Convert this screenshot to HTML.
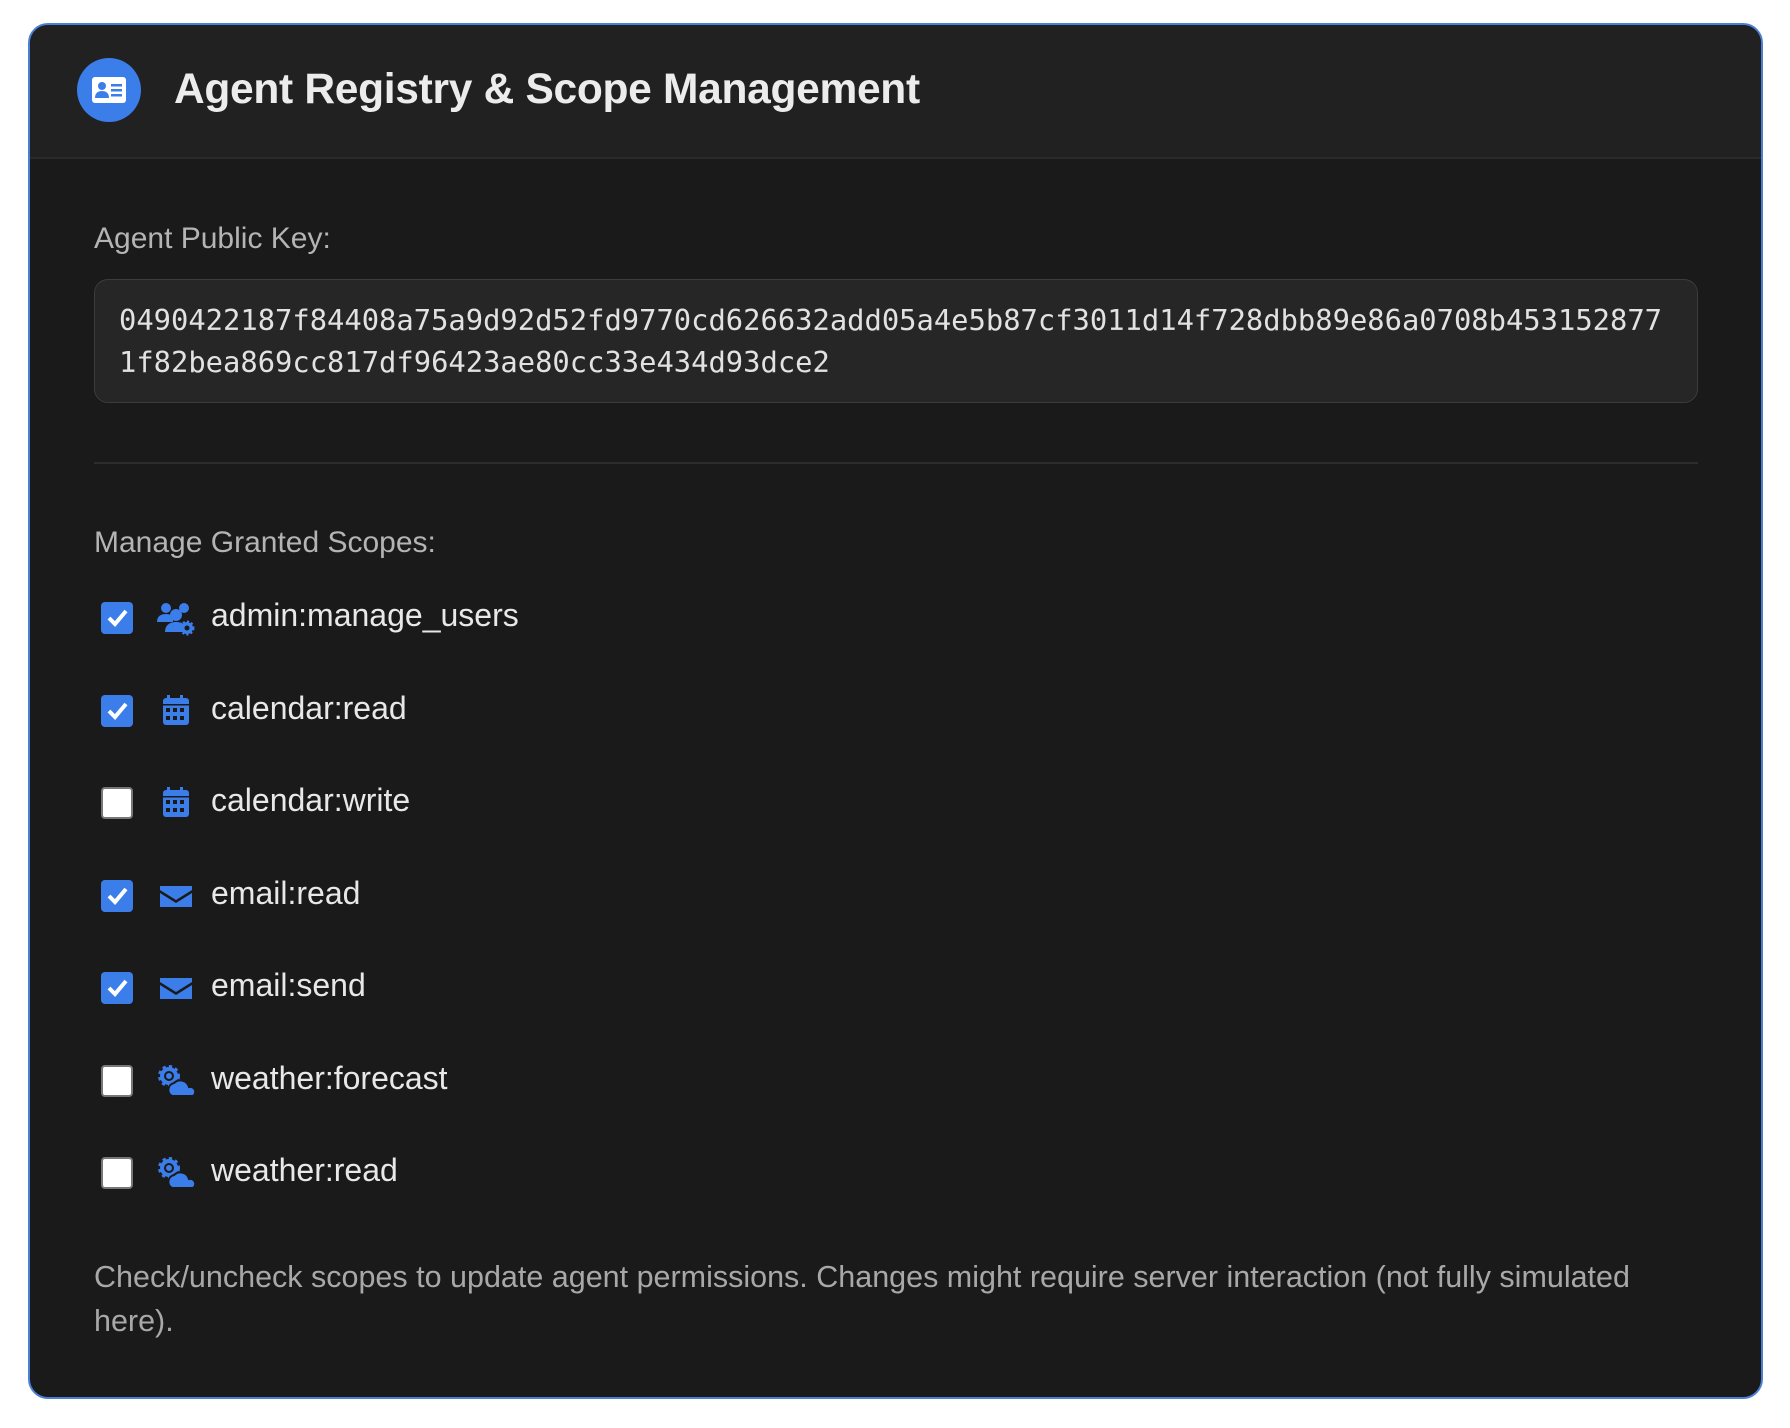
<!DOCTYPE html>
<html><head><style>
*{box-sizing:border-box;margin:0;padding:0}
body{width:1790px;height:1428px;background:#fff;font-family:"Liberation Sans",sans-serif;position:relative;overflow:hidden}
.card{position:absolute;left:28px;top:23px;width:1735px;height:1376px;background:#1a1a1a;border:2px solid #4a7fd6;border-radius:20px;overflow:hidden}
.hdr{position:absolute;left:0;top:0;right:0;height:134px;background:#212121;border-bottom:2px solid #2a2a2a}
.logo{position:absolute;left:47px;top:33px;width:64px;height:64px;border-radius:50%;background:#3b7de9}
.title{position:absolute;left:144px;top:41px;font-size:42.5px;font-weight:bold;color:#ececec;letter-spacing:-0.3px}
.lbl{position:absolute;left:64px;font-size:30px;color:#b4b4b4}
.key{position:absolute;left:64px;top:254px;width:1604px;height:124px;background:#262626;border:1.5px solid #3c3c3c;border-radius:14px;padding:19px 0 0 24px;font-family:"DejaVu Sans Mono","Liberation Mono",monospace;font-size:28.8px;line-height:42px;color:#e2e2e2;white-space:nowrap}
.div{position:absolute;left:64px;top:437px;width:1604px;height:2px;background:#2c2c2c}
.row{position:absolute;left:71px;height:34px}
.cb{position:absolute;left:0;top:0;width:32px;height:32px;border-radius:4px;background:#3b7de9}
.cb.off{background:#fff;border:2px solid #777}
.ic{position:absolute;left:56px;top:-2px;width:38px;height:36px}
.tx{position:absolute;left:110px;top:-5px;font-size:32px;color:#e8e8e8;white-space:nowrap}
.foot{position:absolute;left:64px;top:1230px;width:1600px;font-size:30.5px;line-height:44px;color:#a8a8a8}
</style></head><body>
<div class="card">
<div class="hdr">
<div class="logo"><svg width="64" height="64" viewBox="0 0 64 64"><rect x="15" y="19" width="34" height="26" rx="3" fill="#fff"/><circle cx="25" cy="28" r="4" fill="#3b7de9"/><path d="M18 40c0-5 3-7 7-7s7 2 7 7z" fill="#3b7de9"/><rect x="34" y="26" width="11" height="2.5" fill="#3b7de9"/><rect x="34" y="31" width="11" height="2.5" fill="#3b7de9"/><rect x="34" y="36" width="11" height="2.5" fill="#3b7de9"/></svg></div>
<div class="title">Agent Registry &amp; Scope Management</div>
</div>
<div class="lbl" style="top:197px">Agent Public Key:</div>
<div class="key">0490422187f84408a75a9d92d52fd9770cd626632add05a4e5b87cf3011d14f728dbb89e86a0708b453152877<br>1f82bea869cc817df96423ae80cc33e434d93dce2</div>
<div class="div"></div>
<div class="lbl" style="top:501px">Manage Granted Scopes:</div>

<div class="row" style="top:577px"><div class="cb"><svg width="32" height="32"><path d="M8 16l6 6 11-13" stroke="#fff" stroke-width="4" fill="none"/></svg></div>
<svg class="ic" viewBox="0 0 38 36"><circle cx="9" cy="8" r="5" fill="#3b7de9"/><circle cx="27" cy="8" r="5" fill="#3b7de9"/><path d="M0 22c0-6 4-8 9-8s7 2 7 4v4z" fill="#3b7de9"/><circle cx="19" cy="15" r="6" fill="#3b7de9"/><path d="M8 32c0-7 5-10 11-10 4 0 7 1 8 3v7z" fill="#3b7de9"/><circle cx="30" cy="28" r="6" fill="#3b7de9" stroke="#3b7de9" stroke-width="3" stroke-dasharray="2 2"/><circle cx="30" cy="28" r="2.5" fill="#1a1a1a"/></svg>
<div class="tx">admin:manage_users</div></div>

<div class="row" style="top:670px"><div class="cb"><svg width="32" height="32"><path d="M8 16l6 6 11-13" stroke="#fff" stroke-width="4" fill="none"/></svg></div>
<svg class="ic" viewBox="0 0 38 36"><rect x="10" y="2" width="3" height="6" fill="#3b7de9"/><rect x="23" y="2" width="3" height="6" fill="#3b7de9"/><rect x="6" y="5" width="26" height="27" rx="3" fill="#3b7de9"/><g fill="#1a1a1a"><rect x="9" y="15" width="4" height="4"/><rect x="16" y="15" width="4" height="4"/><rect x="23" y="15" width="4" height="4"/><rect x="9" y="23" width="4" height="4"/><rect x="16" y="23" width="4" height="4"/><rect x="23" y="23" width="4" height="4"/></g><rect x="6" y="11" width="26" height="1.5" fill="#1a1a1a"/></svg>
<div class="tx">calendar:read</div></div>

<div class="row" style="top:762px"><div class="cb off"></div>
<svg class="ic" viewBox="0 0 38 36"><rect x="10" y="2" width="3" height="6" fill="#3b7de9"/><rect x="23" y="2" width="3" height="6" fill="#3b7de9"/><rect x="6" y="5" width="26" height="27" rx="3" fill="#3b7de9"/><g fill="#1a1a1a"><rect x="9" y="15" width="4" height="4"/><rect x="16" y="15" width="4" height="4"/><rect x="23" y="15" width="4" height="4"/><rect x="9" y="23" width="4" height="4"/><rect x="16" y="23" width="4" height="4"/><rect x="23" y="23" width="4" height="4"/></g><rect x="6" y="11" width="26" height="1.5" fill="#1a1a1a"/></svg>
<div class="tx">calendar:write</div></div>

<div class="row" style="top:855px"><div class="cb"><svg width="32" height="32"><path d="M8 16l6 6 11-13" stroke="#fff" stroke-width="4" fill="none"/></svg></div>
<svg class="ic" viewBox="0 0 38 36"><path d="M3 8h32v4L19 22 3 12z" fill="#3b7de9"/><path d="M3 15l16 10 16-10v14H3z" fill="#3b7de9"/></svg>
<div class="tx">email:read</div></div>

<div class="row" style="top:947px"><div class="cb"><svg width="32" height="32"><path d="M8 16l6 6 11-13" stroke="#fff" stroke-width="4" fill="none"/></svg></div>
<svg class="ic" viewBox="0 0 38 36"><path d="M3 8h32v4L19 22 3 12z" fill="#3b7de9"/><path d="M3 15l16 10 16-10v14H3z" fill="#3b7de9"/></svg>
<div class="tx">email:send</div></div>

<div class="row" style="top:1040px"><div class="cb off"></div>
<svg class="ic" viewBox="0 0 38 36"><circle cx="12" cy="13" r="9" fill="#3b7de9" stroke="#3b7de9" stroke-width="4" stroke-dasharray="3 3"/><circle cx="12" cy="13" r="4" fill="none" stroke="#1a1a1a" stroke-width="2"/><path d="M15 33a7 7 0 0 1 2-13 9 9 0 0 1 15 4 5 5 0 0 1 4 9z" fill="#3b7de9" stroke="#1a1a1a" stroke-width="2"/></svg>
<div class="tx">weather:forecast</div></div>

<div class="row" style="top:1132px"><div class="cb off"></div>
<svg class="ic" viewBox="0 0 38 36"><circle cx="12" cy="13" r="9" fill="#3b7de9" stroke="#3b7de9" stroke-width="4" stroke-dasharray="3 3"/><circle cx="12" cy="13" r="4" fill="none" stroke="#1a1a1a" stroke-width="2"/><path d="M15 33a7 7 0 0 1 2-13 9 9 0 0 1 15 4 5 5 0 0 1 4 9z" fill="#3b7de9" stroke="#1a1a1a" stroke-width="2"/></svg>
<div class="tx">weather:read</div></div>

<div class="foot">Check/uncheck scopes to update agent permissions. Changes might require server interaction (not fully simulated here).</div>
</div>
</body></html>
